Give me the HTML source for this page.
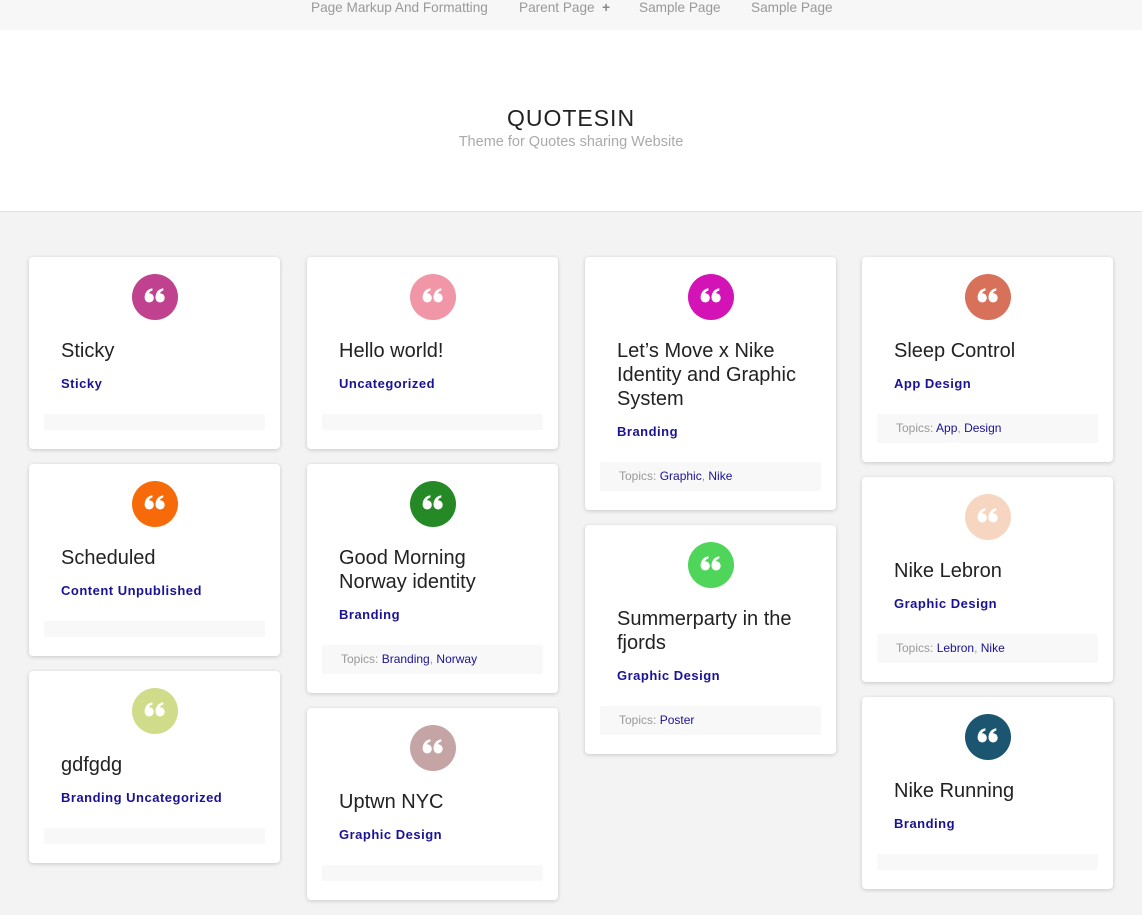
<!DOCTYPE html><html><head><style>
*{margin:0;padding:0;box-sizing:border-box}
body{width:1142px;height:856px;overflow:hidden;background:#f3f3f3;font-family:"Liberation Sans",sans-serif;position:relative}
.nav{height:30px;background:#f7f7f7;font-size:13.6px;color:#999;position:relative}
.nav span{position:absolute;top:0}
.hdr{position:absolute;top:30px;left:0;width:1142px;height:182px;background:#fff;border-bottom:1px solid #e2e2e2;text-align:center}
.hdr h1{font-weight:normal;font-size:23px;letter-spacing:1px;color:#222;margin-top:75px;line-height:26px}
.hdr p{font-size:14.5px;color:#aaa;line-height:22px}
.col{position:absolute;top:257px;width:251px}
.card{background:#fff;border-radius:4px;box-shadow:0 1px 4px rgba(0,0,0,.18);padding:17px 15px 19px;margin-bottom:15px}
.ic{width:46px;height:46px;border-radius:50%;margin:0 auto}
.ic svg{display:block}
.t{font-size:20px;line-height:24px;color:#222;margin:19px 17px 0}
.c{font-size:13px;font-weight:bold;line-height:18px;color:#1a1296;margin:12px 17px 0;letter-spacing:.5px}
.f{background:#f8f8f9;height:16px;margin-top:21px;border-radius:2px}
.f.tp{height:29px;font-size:12px;line-height:29px;padding-left:19px;color:#999}
.f.tp a{color:#1a1296;text-decoration:none}
</style></head><body>
<svg width="0" height="0" style="position:absolute"><defs><g id="q" fill="#fff" transform="translate(23 20) scale(1.28) translate(-23 -21)">
<circle cx="18.5" cy="24" r="3.6"/><path d="M14.9 24C14.9 19.5 17.5 17 21 16.5L21 18.3C18.8 19 17.8 20.5 18 22.5Z"/>
<circle cx="27" cy="24" r="3.6"/><path d="M23.4 24C23.4 19.5 26 17 29.5 16.5L29.5 18.3C27.3 19 26.3 20.5 26.5 22.5Z"/>
</g></defs></svg>
<div class="nav"><span style="left:311px">Page Markup And Formatting</span><span style="left:519px">Parent Page &nbsp;<b style="color:#888">+</b></span><span style="left:639px">Sample Page</span><span style="left:751px">Sample Page</span></div>
<div class="hdr"><h1>QUOTESIN</h1><p>Theme for Quotes sharing Website</p></div>

<div class="col" style="left:29px">
<div class="card"><div class="ic" style="background:#c0428f"><svg width="46" height="46"><use href="#q"/></svg></div><div class="t">Sticky</div><div class="c">Sticky</div><div class="f"></div></div>
<div class="card"><div class="ic" style="background:#f66a0a"><svg width="46" height="46"><use href="#q"/></svg></div><div class="t">Scheduled</div><div class="c">Content Unpublished</div><div class="f"></div></div>
<div class="card"><div class="ic" style="background:#d0dc8a"><svg width="46" height="46"><use href="#q"/></svg></div><div class="t">gdfgdg</div><div class="c">Branding Uncategorized</div><div class="f"></div></div>
</div>
<div class="col" style="left:307px">
<div class="card"><div class="ic" style="background:#f096a6"><svg width="46" height="46"><use href="#q"/></svg></div><div class="t">Hello world!</div><div class="c">Uncategorized</div><div class="f"></div></div>
<div class="card"><div class="ic" style="background:#258a25"><svg width="46" height="46"><use href="#q"/></svg></div><div class="t">Good Morning Norway identity</div><div class="c">Branding</div><div class="f tp">Topics: <a>Branding</a>, <a>Norway</a></div></div>
<div class="card"><div class="ic" style="background:#c4a4a4"><svg width="46" height="46"><use href="#q"/></svg></div><div class="t">Uptwn NYC</div><div class="c">Graphic Design</div><div class="f"></div></div>
</div>
<div class="col" style="left:585px">
<div class="card"><div class="ic" style="background:#d313b6"><svg width="46" height="46"><use href="#q"/></svg></div><div class="t">Let’s Move x Nike Identity and Graphic System</div><div class="c">Branding</div><div class="f tp">Topics: <a>Graphic</a>, <a>Nike</a></div></div>
<div class="card"><div class="ic" style="background:#4fd65a"><svg width="46" height="46"><use href="#q"/></svg></div><div class="t">Summerparty in the fjords</div><div class="c">Graphic Design</div><div class="f tp">Topics: <a>Poster</a></div></div>
</div>
<div class="col" style="left:862px">
<div class="card"><div class="ic" style="background:#d7715a"><svg width="46" height="46"><use href="#q"/></svg></div><div class="t">Sleep Control</div><div class="c">App Design</div><div class="f tp">Topics: <a>App</a>, <a>Design</a></div></div>
<div class="card"><div class="ic" style="background:#f6d6c0"><svg width="46" height="46"><use href="#q"/></svg></div><div class="t">Nike Lebron</div><div class="c">Graphic Design</div><div class="f tp">Topics: <a>Lebron</a>, <a>Nike</a></div></div>
<div class="card"><div class="ic" style="background:#1b5570"><svg width="46" height="46"><use href="#q"/></svg></div><div class="t">Nike Running</div><div class="c">Branding</div><div class="f"></div></div>
</div>
</body></html>
